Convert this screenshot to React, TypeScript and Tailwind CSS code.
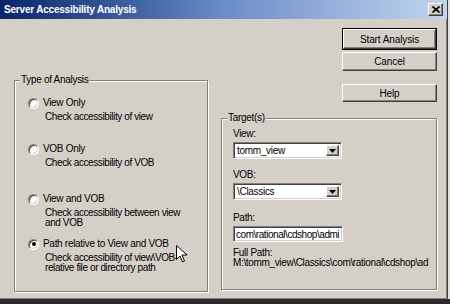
import React from 'react';

// Win2000-style "Server Accessibility Analysis" dialog

const raised =
  'bg-[#d4d0c8] border border-t-white border-l-white border-b-[#404040] border-r-[#404040] shadow-[inset_-1px_-1px_0_#808080]';
const sunken =
  'bg-white border border-t-[#808080] border-l-[#808080] border-b-white border-r-white shadow-[inset_1px_1px_0_#404040,inset_-1px_-1px_0_#d4d0c8]';

function Button({ label, isDefault = false, className = '' }: { label: string; isDefault?: boolean; className?: string }) {
  if (isDefault) {
    return (
      <div className={`w-[95px] border border-black flex ${className}`}>
        <div className={`flex-1 flex items-center justify-center tracking-[-0.1px] ${raised}`}>{label}</div>
      </div>
    );
  }
  return (
    <div className={`w-[95px] flex items-center justify-center tracking-[-0.1px] ${raised} ${className}`}>{label}</div>
  );
}

function GroupBox({ label, className = '', children }: { label: string; className?: string; children: React.ReactNode }) {
  return (
    <div className={`relative border border-[#808080] shadow-[inset_1px_1px_0_#fff,1px_1px_0_#fff] ${className}`}>
      <span className="absolute -top-[7px] left-[5px] px-[1px] bg-[#d4d0c8] leading-[12px]">{label}</span>
      {children}
    </div>
  );
}

interface RadioItemProps {
  label: string;
  lines: string[];
  checked?: boolean;
  className?: string;
}

function RadioItem({ label, lines, checked = false, className = '' }: RadioItemProps) {
  return (
    <div className={`flex flex-col ${className}`}>
      <div className="flex items-center h-[12px] leading-[12px]">
        <span className={`w-[11px] h-[11px] rounded-full flex items-center justify-center ${sunken}`}>
          {checked && <span className="w-[4px] h-[4px] rounded-full bg-black" />}
        </span>
        <span className="ml-[4px]">{label}</span>
      </div>
      <div className="mt-[3px] pl-[17px] leading-[10px] tracking-[-0.4px]">
        {lines.map((l) => (
          <div key={l}>{l}</div>
        ))}
      </div>
    </div>
  );
}

function Combo({ value, className = '' }: { value: string; className?: string }) {
  return (
    <div className={`w-[109px] h-[17px] flex items-stretch p-[2px] ${sunken} ${className}`}>
      <span className="flex-1 pl-[1px] leading-[11px] truncate">{value}</span>
      <span className={`w-[13px] flex items-center justify-center ${raised}`}>
        <svg width="7" height="4" viewBox="0 0 7 4">
          <path d="M0 0h7L3.5 4z" fill="#000" />
        </svg>
      </span>
    </div>
  );
}

export default function App() {
  return (
    <div className="w-[450px] h-[304px] bg-[#e4e1da] font-['Liberation_Sans',Arial,sans-serif] text-[10px] tracking-[-0.3px] text-black overflow-hidden">
      <div className="w-[448px] h-[299px] flex flex-col bg-[#d4d0c8] border-r border-r-[#404040] shadow-[inset_-1px_0_0_#808080] border-b border-b-[#808080]">
        {/* Title bar */}
        <div className="h-[19px] flex items-center pl-[4px] pr-[4px] bg-linear-to-r from-[#0a246a] via-[#6a8cc8] to-[#c2d5ee]">
          <span className="flex-1 text-white font-bold tracking-[-0.2px] leading-[12px]">Server Accessibility Analysis</span>
          <span className={`w-[15px] h-[13px] flex items-center justify-center ${raised}`}>
            <svg width="8" height="7" viewBox="0 0 8 7">
              <path d="M0.5 0.5l7 6M7.5 0.5l-7 6" stroke="#000" strokeWidth="1.6" />
            </svg>
          </span>
        </div>

        {/* Body */}
        <div className="flex-1 flex pl-[14px]">
          <GroupBox label="Type of Analysis" className="relative w-[194px] h-[212px] mt-[61px] pl-[13px] pt-[16px]">
            <RadioItem label="View Only" lines={['Check accessibility of view']} />
            <RadioItem className="mt-[21px]" label="VOB Only" lines={['Check accessibility of VOB']} />
            <RadioItem className="mt-[25px]" label="View and VOB" lines={['Check accessibility between view', 'and VOB']} />
            <RadioItem
              className="mt-[10px]"
              label="Path relative to View and VOB"
              lines={['Check accessibility of view\\VOB-', 'relative file or directory path']}
              checked
            />
            {/* mouse pointer */}
            <svg className="absolute left-[161px] top-[164px]" width="12" height="18" viewBox="0 0 12 18">
              <path d="M0.5 0.5v14l3.5-3.5 2.5 6 2-1-2.5-6h5z" fill="#fff" stroke="#000" strokeWidth="1" />
            </svg>
          </GroupBox>

          <div className="w-[216px] ml-[13px] flex flex-col">
            <Button isDefault label="Start Analysis" className="self-end h-[22px] mt-[9px]" />
            <Button label="Cancel" className="self-end h-[19px] mt-[2px]" />
            <Button label="Help" className="self-end h-[18px] mt-[13px]" />

            <GroupBox label="Target(s)" className="h-[172px] mt-[16px] pl-[11px] pt-[9px]">
              <div className="leading-[12px]">View:</div>
              <Combo value="tomm_view" className="mt-[2px]" />
              <div className="leading-[12px] mt-[10px]">VOB:</div>
              <Combo value="\Classics" className="mt-[2px]" />
              <div className="leading-[12px] mt-[12px]">Path:</div>
              <div className={`w-[110px] h-[16px] mt-[2px] pl-[2px] flex items-center overflow-hidden whitespace-nowrap tracking-[-0.45px] ${sunken}`}>
                com\rational\cdshop\admi
              </div>
              <div className="leading-[10px] mt-[6px]">Full Path:</div>
              <div className="leading-[10px] tracking-[-0.35px] whitespace-nowrap">
                M:\tomm_view\Classics\com\rational\cdshop\ad
              </div>
            </GroupBox>
          </div>
        </div>
      </div>
      <div className="h-[5px] bg-[#2a2a2a]" />
    </div>
  );
}
